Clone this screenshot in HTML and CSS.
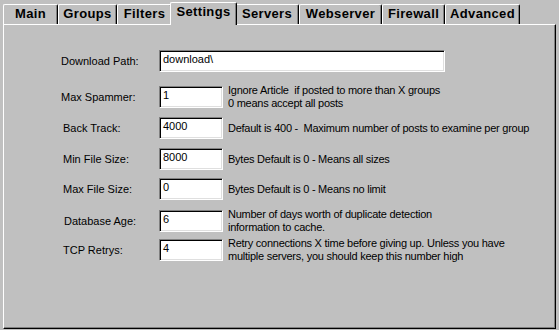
FILE: index.html
```html
<!DOCTYPE html>
<html>
<head>
<meta charset="utf-8">
<link rel="stylesheet" href="styles.css">
</head>
<body>
<div class="tabs">
  <div class="tab t-main">Main</div>
  <div class="tab t-groups">Groups</div>
  <div class="tab t-filters">Filters</div>
  <div class="tab t-settings active">Settings</div>
  <div class="tab t-servers">Servers</div>
  <div class="tab t-web">Webserver</div>
  <div class="tab t-fire">Firewall</div>
  <div class="tab t-adv">Advanced</div>
</div>
<div class="panel">
  <div class="row">
    <div class="lbl">Download Path:</div>
    <div class="field long">download\</div>
  </div>
  <div class="row gap-14">
    <div class="lbl">Max Spammer:</div>
    <div class="field">1</div>
    <div class="desc">Ignore Article  if posted to more than X groups
0 means accept all posts</div>
  </div>
  <div class="row">
    <div class="lbl in2">Back Track:</div>
    <div class="field">4000</div>
    <div class="desc">Default is 400 -  Maximum number of posts to examine per group</div>
  </div>
  <div class="row">
    <div class="lbl in2">Min File Size:</div>
    <div class="field">8000</div>
    <div class="desc">Bytes Default is 0 - Means all sizes</div>
  </div>
  <div class="row gap-8">
    <div class="lbl in2">Max File Size:</div>
    <div class="field">0</div>
    <div class="desc">Bytes Default is 0 - Means no limit</div>
  </div>
  <div class="row gap-10">
    <div class="lbl in3">Database Age:</div>
    <div class="field">6</div>
    <div class="desc">Number of days worth of duplicate detection
information to cache.</div>
  </div>
  <div class="row gap-7">
    <div class="lbl in2">TCP Retrys:</div>
    <div class="field">4</div>
    <div class="desc">Retry connections X time before giving up. Unless you have
multiple servers, you should keep this number high</div>
  </div>
</div>
</body>
</html>
```

FILE: styles.css
```css
html, body {
  margin: 0;
  padding: 0;
}
body {
  background: #c0c0c0;
  font-family: "Liberation Sans", Arial, sans-serif;
  font-size: 11px;
  color: #000;
  width: 559px;
  height: 330px;
  overflow: hidden;
}
.tabs {
  display: flex;
  align-items: flex-end;
  height: 24px;
  padding-left: 3px;
  box-sizing: border-box;
}
.tab {
  box-sizing: border-box;
  height: 20px;
  border-top: 1px solid #fff;
  border-left: 1px solid #fff;
  border-right: 1px solid #000;
  box-shadow: inset -1px 0 #808080;
  border-radius: 2px 2px 0 0;
  font-weight: bold;
  font-size: 13px;
  letter-spacing: 0.35px;
  text-align: center;
  line-height: 18px;
  white-space: nowrap;
  background: #c0c0c0;
}
.t-main { width: 55px; }
.t-groups { width: 59px; }
.t-filters { width: 55px; }
.t-settings { width: 63px; }
.t-servers { width: 64px; }
.t-web { width: 83px; }
.t-fire { width: 63px; }
.t-adv { width: 75px; }
.tab.active {
  width: 67px;
  height: 23px;
  margin: 0 -2px -1px;
  position: relative;
  z-index: 1;
}
.panel {
  margin-left: 3px;
  width: 553px;
  height: 305px;
  box-sizing: border-box;
  border-top: 1px solid #fff;
  border-left: 1px solid #fff;
  border-right: 1px solid #000;
  border-bottom: 1px solid #000;
  box-shadow: inset -1px -1px #808080;
  padding: 25px 0 0 57px;
}
.row {
  display: flex;
  align-items: center;
  height: 22px;
  margin-top: 9px;
}
.row:first-child { margin-top: 0; }
.row.gap-14 { margin-top: 14px; }
.row.gap-8 { margin-top: 8px; }
.row.gap-10 { margin-top: 10px; }
.row.gap-7 { margin-top: 7px; }
.lbl {
  width: 98px;
  box-sizing: border-box;
  white-space: nowrap;
}
.lbl.in2 { padding-left: 2px; }
.lbl.in3 { padding-left: 3px; }
.field {
  box-sizing: border-box;
  flex: none;
  height: 22px;
  width: 64px;
  background: #fff;
  border-top: 1px solid #808080;
  border-left: 1px solid #808080;
  border-right: 1px solid #fff;
  border-bottom: 1px solid #fff;
  box-shadow: inset 1px 1px #000, inset -1px -1px #dfdfdf;
  padding: 2px 0 0 3px;
  line-height: 13px;
  white-space: nowrap;
}
.field.long { width: 286px; }
.desc {
  margin-left: 5px;
  white-space: pre;
  line-height: 13px;
  letter-spacing: -0.25px;
}
```
